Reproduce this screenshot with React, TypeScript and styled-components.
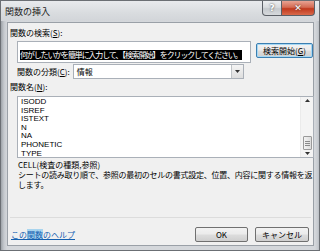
import React from "react";
import styled, { createGlobalStyle } from "styled-components";

const Global = createGlobalStyle`
  html, body { margin: 0; padding: 0; background: #ffffff; }
  body { font-family: "Noto Sans CJK JP", "Noto Sans", sans-serif; }
`;

const FONT = `"Noto Sans CJK JP", "Noto Sans", sans-serif`;

const Window = styled.div`
  width: 320px;
  height: 251px;
  box-sizing: border-box;
  border: 1px solid #6b6f74;
  background: linear-gradient(90deg, #9ea3a9 0px, #c5c9ce 3px, #d4d7db 6px, #d4d7db 314px, #c5c9ce 317px, #9ea3a9 320px);
  display: flex;
  flex-direction: column;
  font-family: ${FONT};
  color: #000;
  overflow: hidden;
`;

const TitleBar = styled.div`
  height: 20px;
  display: flex;
  align-items: flex-start;
  justify-content: space-between;
  background: linear-gradient(180deg, #e8eaed 0%, #d9dcdf 60%, #d2d5d9 100%);
`;

const Title = styled.div`
  font-size: 9px;
  line-height: 9px;
  padding: 6px 0 0 4px;
  color: #1e1e1e;
`;

const Controls = styled.div`
  display: flex;
  margin-right: 4px;
`;

const CtrlButton = styled.div<{ $close?: boolean }>`
  width: ${(p) => (p.$close ? 33 : 20)}px;
  height: 15px;
  box-sizing: border-box;
  display: flex;
  align-items: center;
  justify-content: center;
  font-family: "DejaVu Sans", sans-serif;
  font-size: 9px;
  font-weight: bold;
  color: #fff;
  border: 1px solid #5b5f66;
  border-top: none;
  border-radius: ${(p) => (p.$close ? "0 0 4px 0" : "0 0 0 4px")};
  border-left: ${(p) => (p.$close ? "none" : "1px solid #5b5f66")};
  background: ${(p) =>
    p.$close
      ? "linear-gradient(180deg, #e8a393 0%, #d46a52 45%, #c1391d 55%, #d8694b 100%)"
      : "linear-gradient(180deg, #eceef0 0%, #d8dbde 45%, #c5c9cd 55%, #d6d9dc 100%)"};
  text-shadow: 0 0 2px #333;
`;

const Client = styled.div`
  flex: 1;
  margin: 1px 5px 4px 6px;
  border: 1px solid #9aa0a7;
  background: #f0f0f0;
  display: flex;
  flex-direction: column;
  padding: 5px 0 0 2px;
  font-size: 8px;
`;

const Label = styled.div<{ $gap?: number }>`
  font-size: 8px;
  line-height: 10px;
  margin-top: ${(p) => p.$gap ?? 0}px;
  white-space: nowrap;
`;

const SearchRow = styled.div`
  display: flex;
  align-items: flex-start;
  margin-top: 3px;
  padding-left: 7px;
`;

const SearchBox = styled.div`
  width: 234px;
  height: 22px;
  box-sizing: border-box;
  border: 1px solid #aab0b8;
  background: #fff;
  padding: 7px 0 0 2px;
  overflow: hidden;
`;

const Selected = styled.span`
  background: #000;
  color: #fff;
  font-size: 8px;
  line-height: 10px;
  letter-spacing: -1.15px;
  white-space: nowrap;
  display: inline-block;
`;

const PushButton = styled.div<{ $w: number }>`
  width: ${(p) => p.$w}px;
  height: 15px;
  box-sizing: border-box;
  border: 1px solid #707070;
  border-radius: 2px;
  background: linear-gradient(180deg, #f2f2f2 0%, #ebebeb 48%, #dddddd 52%, #cfcfcf 100%);
  display: flex;
  align-items: center;
  justify-content: center;
  font-size: 8px;
  white-space: nowrap;
`;

const DefaultButton = styled(PushButton)`
  border-color: #3c7fb1;
  box-shadow: inset 0 0 0 1px #a6d8f4;
`;

const SearchButtonWrap = styled.div`
  margin: 2px 0 0 5px;
`;

const CategoryRow = styled.div`
  display: flex;
  align-items: center;
  margin-top: 1px;
  padding-left: 7px;
`;

const Select = styled.div`
  margin-left: 3px;
  width: 171px;
  height: 15px;
  box-sizing: border-box;
  border: 1px solid #aab0b8;
  background: #fff;
  display: flex;
  align-items: center;
  justify-content: space-between;
  padding-left: 3px;
`;

const DropButton = styled.div`
  width: 12px;
  height: 13px;
  box-sizing: border-box;
  border-left: 1px solid #c0c4c8;
  background: linear-gradient(180deg, #f4f4f4, #dedede);
  display: flex;
  align-items: center;
  justify-content: center;
`;

const ListBox = styled.div`
  margin: 4px 0 0 7px;
  width: 297px;
  height: 62px;
  box-sizing: border-box;
  border: 1px solid #aab0b8;
  background: #fff;
  display: flex;
`;

const ListItems = styled.div`
  flex: 1;
  padding: 1px 0 0 3px;
  font-family: "Liberation Sans", Arial, sans-serif;
  font-size: 8px;
  line-height: 8.6px;
`;

const ScrollBar = styled.div`
  width: 13px;
  display: flex;
  flex-direction: column;
  align-items: center;
  justify-content: space-between;
  background: #f4f4f4;
  border-left: 1px solid #ebebeb;
  padding: 2px 0 2px;
  box-sizing: border-box;
`;

const Thumb = styled.div`
  width: 9px;
  height: 14px;
  box-sizing: border-box;
  border: 1px solid #9a9a9a;
  border-radius: 1px;
  background: linear-gradient(90deg, #f3f3f3, #dcdcdc);
  display: flex;
  flex-direction: column;
  align-items: center;
  justify-content: center;
  gap: 1px;
  margin-top: auto;
  margin-bottom: 2px;
`;

const Grip = styled.div`
  width: 5px;
  height: 1px;
  background: #8a8a8a;
`;

const Syntax = styled.div`
  padding-left: 8px;
  margin-top: 2px;
  font-size: 8px;
  line-height: 10px;
`;

const Description = styled.div`
  padding-left: 8px;
  font-size: 8px;
  line-height: 9.5px;
  letter-spacing: -0.25px;
  white-space: nowrap;
`;

const Spacer = styled.div`
  flex: 1;
`;

const Separator = styled.div`
  height: 1px;
  background: #dcdcdc;
  margin-right: 2px;
`;

const Footer = styled.div`
  display: flex;
  align-items: center;
  padding: 9px 4px 3px 1px;
`;

const HelpLink = styled.span`
  color: #1560b0;
  text-decoration: underline;
  font-size: 8px;
  line-height: 10px;
  white-space: nowrap;
`;

const Hi = styled.span`
  background: #a8d4ee;
`;

const FooterButtons = styled.div`
  margin-left: auto;
  display: flex;
  gap: 7px;
`;

const Arrow = ({ up }: { up?: boolean }) => (
  <svg width="5" height="3" viewBox="0 0 5 3">
    <path d={up ? "M0 3 L2.5 0 L5 3 Z" : "M0 0 L5 0 L2.5 3 Z"} fill="#333" />
  </svg>
);

const items = ["ISODD", "ISREF", "ISTEXT", "N", "NA", "PHONETIC", "TYPE"];

export default function App() {
  return (
    <>
      <Global />
      <Window>
        <TitleBar>
          <Title>関数の挿入</Title>
          <Controls>
            <CtrlButton>?</CtrlButton>
            <CtrlButton $close>✕</CtrlButton>
          </Controls>
        </TitleBar>
        <Client>
          <Label>
            関数の検索(<u>S</u>):
          </Label>
          <SearchRow>
            <SearchBox>
              <Selected>何がしたいかを簡単に入力して、【検索開始】 をクリックしてください。</Selected>
            </SearchBox>
            <SearchButtonWrap>
              <DefaultButton $w={57}>
                検索開始(<u>G</u>)
              </DefaultButton>
            </SearchButtonWrap>
          </SearchRow>
          <CategoryRow>
            <Label>
              関数の分類(<u>C</u>):
            </Label>
            <Select>
              <span>情報</span>
              <DropButton>
                <Arrow />
              </DropButton>
            </Select>
          </CategoryRow>
          <Label $gap={3}>
            関数名(<u>N</u>):
          </Label>
          <ListBox>
            <ListItems>
              {items.map((i) => (
                <div key={i}>{i}</div>
              ))}
            </ListItems>
            <ScrollBar>
              <Arrow up />
              <Thumb>
                <Grip />
                <Grip />
                <Grip />
              </Thumb>
              <Arrow />
            </ScrollBar>
          </ListBox>
          <Syntax>CELL(検査の種類,参照)</Syntax>
          <Description>
            シートの読み取り順で、参照の最初のセルの書式設定、位置、内容に関する情報を返
            <br />
            します。
          </Description>
          <Spacer />
          <Separator />
          <Footer>
            <HelpLink>
              この<Hi>関数</Hi>のヘルプ
            </HelpLink>
            <FooterButtons>
              <PushButton $w={53}>OK</PushButton>
              <PushButton $w={54}>キャンセル</PushButton>
            </FooterButtons>
          </Footer>
        </Client>
      </Window>
    </>
  );
}
